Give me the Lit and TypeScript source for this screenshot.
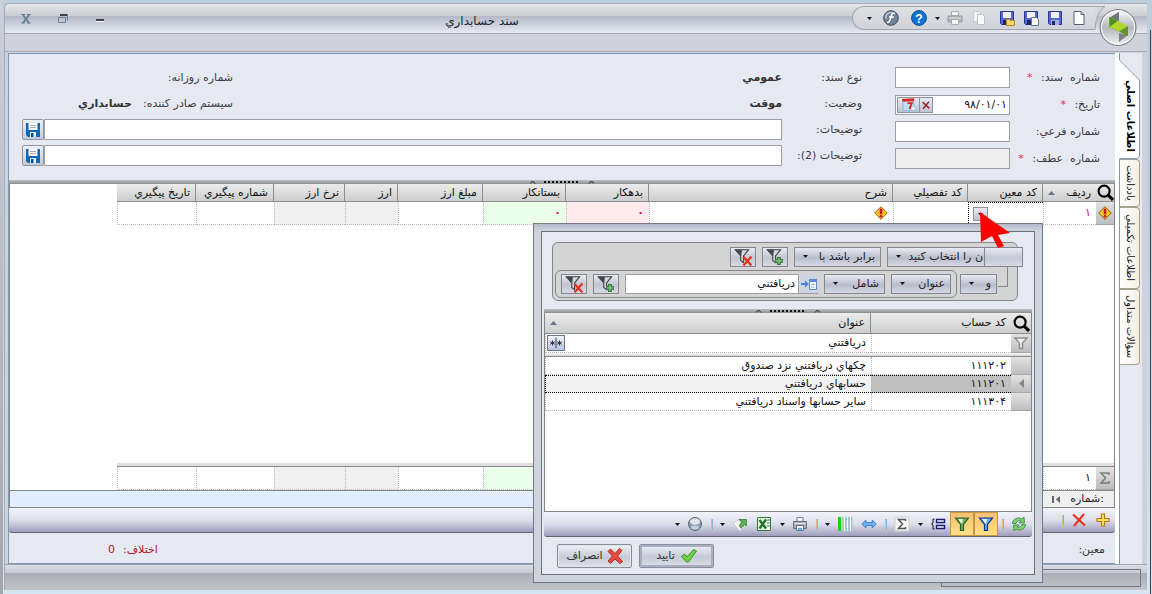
import { LitElement, html, css, svg, nothing } from "lit";
import { customElement } from "lit/decorators.js";
import { classMap } from "lit/directives/class-map.js";

const ICONS: Record<string, unknown> = {
  page: svg`<path d="M3 1.500h7l3 3v10H3z" fill="#fff" stroke="#55607a"/><path d="M10 1.500v3h3" fill="#cdd6e6" stroke="#55607a"/>`,
  save: svg`<path d="M1.500 1.500h13v13h-12l-1-1z" fill="#5a68d2" stroke="#2a368c"/><path d="M4 2h8v6H4z" fill="#eef1fd"/><path d="M4 10h8v5H4z" fill="#a5aee8"/><path d="M5 11h3v4H5z" fill="#1d2766"/>`,
  saveDoc: svg`<path d="M1.500 1.500h13v13h-12l-1-1z" fill="#5a68d2" stroke="#2a368c"/><path d="M4 2h8v6H4z" fill="#eef1fd"/><path d="M4 10h4v5H4z" fill="#1d2766"/><path d="M8.500 7.500h5l2 2v6h-7z" fill="#fff" stroke="#5d77a8"/>`,
  saveFolder: svg`<path d="M1.500 1.500h13v13h-12l-1-1z" fill="#5a68d2" stroke="#2a368c"/><path d="M4 2h8v6H4z" fill="#eef1fd"/><path d="M4 10h3v5H4z" fill="#1d2766"/><path d="M7.500 15.500v-6h3l1 1h4v5z" fill="#ffd56a" stroke="#b98316"/>`,
  copy: svg`<path d="M2.500 1.500h5l2 2v8h-7z" fill="#f1f2f4" stroke="#c9cbd0"/><path d="M6.500 4.500h5l2 2v8h-7z" fill="#fafafa" stroke="#c0c2c8"/>`,
  printGrey: svg`<path d="M4.500 1.500h7v4h-7z" fill="#f4f4f4" stroke="#a9abb0"/><path d="M1 6h14v6H1z" fill="#b5b7bb" stroke="#999ba0"/><path d="M4.500 9.500h7v5h-7z" fill="#f6f6f6" stroke="#a9abb0"/><path d="M2 8h12" stroke="#e4e4e6"/>`,
  print: svg`<path d="M5 1.500h6v4H5z" fill="#e8f4ff" stroke="#77808f"/><path d="M1.500 5.500h13v7h-13z" fill="#aab0bb" stroke="#676d7a"/><path d="M2.500 7.500h11" stroke="#e4e7ee"/><path d="M4.500 9.500h7v5h-7z" fill="#f4faff" stroke="#677387"/><path d="M6 12h4v2H6z" fill="#4fb6ee"/>`,
  help: svg`<circle cx="8" cy="8" r="7.400" fill="#0d74cf" stroke="#084c93"/><text x="8" y="12.500" text-anchor="middle" font-family="Liberation Sans" font-weight="700" font-size="12" fill="#fff">?</text>`,
  func: svg`<circle cx="8" cy="8" r="7.300" fill="#6f8197" stroke="#3e4c60"/><path d="M3 9a5 5 0 0 1 7-6" fill="none" stroke="#b7c4d4" stroke-width="1.500"/><path d="M12 3.500c-3-1-3.500 1-4.500 5S5.500 12.500 4 12.500M6 7h5" fill="none" stroke="#fff" stroke-width="1.600"/>`,
  disk: svg`<path d="M1 1h14v14H3l-2-2z" fill="#0b68b8"/><path d="M3.500 1h9v7h-9z" fill="#fff"/><path d="M5 3.500h6M5 5.500h6" stroke="#a9adb5"/><path d="M5 10h6v5H5z" fill="#e7f1fb"/><path d="M6 11h2.500v4H6z" fill="#0a4a8c"/>`,
  calendar: svg`<path d="M1.500 3.500h11l3 11h-13z" fill="#bfe0f8" stroke="#8bb4d6"/><path d="M1 2l13-.8V4.500L1.500 5z" fill="#dd2c1d"/><path d="M7 6.500h4.500L9 13" fill="none" stroke="#d42c1e" stroke-width="2"/><path d="M11 13l3.500-3v4z" fill="#fff"/>`,
  clear: svg`<path d="M3.500 4l9 8.500M12 3.500L4 13" stroke="#9c1f2b" stroke-width="2"/>`,
  warn: svg`<path d="M8 .8L15.200 8 8 15.200.8 8z" fill="#f7c624" stroke="#7a5010"/><path d="M8 3v6.500" stroke="#c61616" stroke-width="2.800"/><circle cx="8" cy="11.700" r="1.500" fill="#c61616"/>`,
  search: svg`<circle cx="6.700" cy="6.700" r="5.200" fill="none" stroke="#000" stroke-width="2"/><path d="M10.500 10.500l4.500 4.500" stroke="#000" stroke-width="3"/>`,
  funnelGrey: svg`<path d="M2 3h12L9.500 8v5.500h-3V8z" fill="#f3f3f3" stroke="#8f8f8f" stroke-width="1.500"/>`,
  funnelAdd: svg`<path d="M1 1.500h12L8.500 7v6L6 11V7z" fill="#d4dade" stroke="#3f4347"/><path d="M1 1.500h6L6.500 7z" fill="#44484d"/><path d="M11.500 8v7M8 11.500h7" stroke="#3c7a42" stroke-width="3.500"/><path d="M11.500 9v5M9 11.500h5" stroke="#79bd78" stroke-width="1.500"/>`,
  funnelDel: svg`<path d="M1 1.500h12L8.500 7v6L6 11V7z" fill="#d4dade" stroke="#3f4347"/><path d="M1 1.500h6L6.500 7z" fill="#44484d"/><path d="M8.500 8l7 7.500M15.500 7.500l-7 8" stroke="#e6341f" stroke-width="2"/>`,
  funnelBlue: svg`<path d="M1.500 2h13L9.500 8.500v6h-3v-6z" fill="#5fb2ee" stroke="#0d2f8d" stroke-width="1.200"/><path d="M4 3h5L8 8z" fill="#e3f6ff"/>`,
  funnelGreen: svg`<path d="M1.500 2h13L9.500 8.500v6h-3v-6z" fill="#6dab5c" stroke="#2c602b" stroke-width="1.200"/><path d="M4 3h5L8 8z" fill="#e6f5df"/>`,
  pick: svg`<path d="M0 7h4V4.500L8 8l-4 3.500V9H0z" fill="#3f86dd"/><path d="M8.500 3.500h7v10h-7z" fill="#fff" stroke="#5b8bd0"/><path d="M8 3h8v3H8z" fill="#5b8bd0"/><path d="M10 8.500h4M10 11h4" stroke="#8fa8cc"/>`,
  contains: svg`<path d="M8 2v12" stroke="#1f2633"/><path d="M4 5v6M1.300 6.500l5.400 3M6.700 6.500l-5.400 3M12 5v6M9.300 6.500l5.400 3M14.700 6.500l-5.400 3" stroke="#1f2633"/>`,
  refresh: svg`<path d="M1.500 7.500C1.500 3 7 .5 11 3l2-2 .5 6H8l2-2c-2-1-4.500 0-5 2.500z" fill="#7fd173" stroke="#2f8436" stroke-width=".8"/><path d="M14.500 8.500c0 4.500-5.500 7-9.500 4.500l-2 2L2.500 9H8l-2 2c2 1 4.500 0 5-2.500z" fill="#7fd173" stroke="#2f8436" stroke-width=".8"/>`,
  group: svg`<path d="M6.500 3.500h8v3h-8zM6.500 9.500h8v3h-8z" fill="#fff" stroke="#141d72" stroke-width="1.400"/><path d="M4.500 3H3v4L1.500 8 3 9v4h1.500" fill="none" stroke="#111"/>`,
  sigma: svg`<path d="M1 1h14v14H1z" fill="#f3f3f3" stroke="#d0d0d4"/><path d="M11.500 5V3.500h-7L8.500 8l-4 4.500h7V11" fill="none" stroke="#555" stroke-width="1.500"/>`,
  sum: svg`<path d="M12 5V3H4l4.500 5L4 13h8v-2" fill="none" stroke="#7c7c7c" stroke-width="1.500"/>`,
  width: svg`<path d="M.8 8l4-4v2.500h6.400V4l4 4-4 4V9.500H4.800V12z" fill="#6eb4ee" stroke="#2b70b8" stroke-width=".8"/>`,
  columns: svg`<path d="M1 1h3v14H1z" fill="#1fd019"/><path d="M5 1h2v14H5z" fill="#9fdd9c"/><path d="M8 1h2v14H8zM11 1h2v14h-2zM14 1h1.500v14H14z" fill="#a7c4d6"/><path d="M7 1h1v14H7zM10 1h1v14h-1zM13 1h1v14h-1z" fill="#fff"/>`,
  excel: svg`<path d="M1.500 1.500h13v13h-13z" fill="#fff" stroke="#2f7c37"/><path d="M2 2h9v12H2z" fill="#dff0db"/><path d="M3.500 4l6.500 8.500M10 3.500L3.500 12.500" stroke="#26722d" stroke-width="2.300"/><path d="M11 4h3M11 7h3M11 10h3" stroke="#2f7c37"/>`,
  export: svg`<path d="M1 7l6-3.500 5 8L8 15z" fill="#fff" stroke="#c5c8cd"/><path d="M7 3.500h7.500V10l-2-1.500-3.500 4-2-3L10 6z" fill="#5fae5a" stroke="#2c6f2b" stroke-width=".7"/>`,
  sphere: svg`<circle cx="8" cy="8" r="6.500" fill="#8f9aac" stroke="#5c6472"/><ellipse cx="8" cy="5.500" rx="5" ry="3.300" fill="#dfe5ee"/><ellipse cx="8" cy="11.500" rx="4" ry="2" fill="#bed1e2"/>`,
  tick: svg`<path d="M.5 8.500l3-2.500L6 9l6.500-7.500L15.500 3l-8 11h-2z" fill="#6fd044" stroke="#2f8a1d" stroke-width=".9"/>`,
  cross: svg`<path d="M1 3.500L3.500 1 8 5.500 12.500.5l2.500 2L10.500 8l5 5.500-2.500 2L8 11l-4.500 4.500L1 13l4.500-5z" fill="#ea4a42" stroke="#94160f" stroke-width=".8"/>`,
  plus: svg`<path d="M6.500 2h3v4.500H14v3H9.500V14h-3V9.500H2v-3h4.500z" fill="#ffe06a" stroke="#b47a13" stroke-width="1.200"/>`,
  remove: svg`<path d="M2 2.500l12 11M13 2L3 14" stroke="#e8321d" stroke-width="2"/>`,
};

const icon = (name: string, size = 16) =>
  html`<svg width=${size} height=${size} viewBox="0 0 16 16" aria-hidden="true">${ICONS[name]}</svg>`;
const caret = html`<svg width="5" height="3" viewBox="0 0 5 3" aria-hidden="true"><path d="M0 0h5L2.500 3z" fill="#111"/></svg>`;
const sortMark = html`<svg class="sort" width="7" height="4" viewBox="0 0 7 4" aria-hidden="true"><path d="M0 4h7L3.500 0z" fill="#6d7488"/></svg>`;
const grip = html`<div class="splitter"><svg width="64" height="4" viewBox="0 0 64 4" aria-hidden="true">
  <path d="M0 3.500L2.500 1 5 3.500M59 3.500L61.500 1 64 3.500" fill="none" stroke="#111"/>
  <path d="M14 2h36" stroke="#111" stroke-width="2" stroke-dasharray="2 2"/></svg></div>`;

type Tool = [name: string, label: string, active?: boolean];
const tool = ([name, label, active]: Tool) => {
  if (name === "|") return html`<span class="sep"></span>`;
  if (name === "v") return html`<button class="tool drop" aria-label=${label}>${caret}</button>`;
  return html`<button class=${classMap({ tool: true, active: !!active })} aria-label=${label}>${icon(name)}</button>`;
};

const shared = css`
  * { box-sizing: border-box; }
  button, input, select { font: inherit; color: inherit; margin: 0; padding: 0; border-radius: 0; }
  button { background: none; border: 0; display: inline-flex; align-items: center; justify-content: center; }
  svg { display: block; flex: none; }
  input { border: 1px solid #a0a0a4; background: #fff; min-width: 0; outline: 0; }
  table { border-collapse: separate; border-spacing: 0; table-layout: fixed; }
  th { font-weight: 400; text-align: right; white-space: nowrap; background: linear-gradient(#ececec, #cccdce); border-bottom: 1px solid #8c8c8c; padding: 0 5px; color: #111; }
  td { padding: 0 5px; white-space: nowrap; color: #111; border-left: 1px dotted #b8b8b8; border-bottom: 1px dotted #b8b8b8; }
  .splitter { height: 4px; background: linear-gradient(#bfc1c5, #8a8b8e); display: flex; justify-content: center; flex: none; }
  .tool { width: 24px; height: 24px; flex: none; }
  .drop { width: 12px; }
  .active { background: linear-gradient(#f6c173, #ffdf86); border: 1px solid #c79647; }
  .sep { width: 9px; height: 11px; display: flex; justify-content: center; flex: none; }
  .sep::before { content: ""; width: 2px; background: linear-gradient(90deg, #d9bd84 50%, #8cb2da 50%); }
  .toolbar { display: flex; align-items: center; height: 25px; flex: none; background: linear-gradient(#f2f3fa 0%, #dcdfeb 50%, #9f9dbb 100%); border-bottom: 1px solid #63646c; border-radius: 0 0 3px 3px; }
  .search { padding: 0; }
  .search svg { margin: auto; }
  .headcell { display: flex; align-items: center; justify-content: space-between; }
  .rowmark { background: linear-gradient(#e2e2e2, #bdbec0); border: 1px solid #a5a5a5; border-width: 0 0 1px 0; padding: 0; }
  .rowmark svg { margin: auto; }
`;

@customElement("account-lookup")
export class AccountLookup extends LitElement {
  static styles = [shared, css`
    :host { display: flex; flex-direction: column; border: 1px solid #777a84; padding: 7px; background: #cfd3de; box-shadow: inset 0 6px 4px -3px #b2b9c8; direction: rtl; }
    .inner { border: 1px solid #6c6f78; background: #e6e9f2; flex: 1; display: flex; flex-direction: column; padding: 10px 2px 6px; }
    .builder { margin: 0 14px 8px 8px; height: 59px; border: 1px solid #85868a; border-radius: 6px; background: #d4d4d4; position: relative; padding: 4px 0 1px 2px; display: flex; flex-direction: column; gap: 3px; }
    .line { display: flex; align-items: center; gap: 6px; }
    .first { margin-right: -6px; padding-left: 175px; }
    .second { padding-right: 20px; gap: 3px; }
    .nested { flex: 1; display: flex; gap: 6px; align-items: center; border: 1px solid #85868a; border-radius: 6px; height: 28px; padding: 0 5px; }
    .pick { display: flex; position: relative; height: 20px; border: 1px solid #85868f; background: linear-gradient(#e8eaf3, #b9bdcb 55%, #d6d9e4); flex: none; }
    .pick svg { position: absolute; left: 8px; top: 7px; pointer-events: none; }
    select { appearance: none; border: 0; background: none; width: 100%; padding: 0 5px 0 16px; outline: 0; color: #222; }
    .field { width: 136px; }
    .field select { padding-right: 39px; }
    .cap { position: absolute; right: 0; top: 0; width: 38px; height: 18px; border-left: 1px solid #85868f; background: linear-gradient(#e8eaf3, #c4c8d5 55%, #d6d9e4); }
    .op { width: 87px; }
    .and { width: 37px; }
    .col { width: 60px; }
    .like { width: 61px; }
    .ib { width: 26px; height: 20px; border: 1px solid #85868f; background: linear-gradient(#e8eaf3, #c2c6d3 55%, #d6d9e4); flex: none; }
    .value { flex: 1; display: flex; height: 20px; min-width: 0; }
    .value input { flex: 1; padding: 0 3px; color: #111; }
    .value button { width: 19px; border: 1px solid #9a9ba3; border-width: 0 0 1px; background: #cfd3de; }
    .elbow { position: absolute; right: 9px; top: 24px; width: 10px; height: 20px; border: 1px solid #85868a; border-width: 0 1px 1px 0; }
    .grid { flex: 1; background: #fff; border: 1px solid #85868a; border-width: 0 1px 1px; }
    table { width: 100%; }
    thead th { height: 21px; }
    th.name { border-right: 1px solid #8c8c8c; }
    tbody td { height: 18px; }
    tbody tr.filter td { height: 19px; }
    .filterend td { height: 4px; padding: 0; border: 0; border-bottom: 1px solid #8c8c8c; background: linear-gradient(#fafafa, #d6d6d6); }
    tr.filter input { border: 0; flex: 1; }
    .cellrow { display: flex; align-items: center; justify-content: space-between; height: 18px; }
    .mode { width: 18px; height: 16px; border: 1px solid #6d7488; background: linear-gradient(#f3f5fb, #b8c6e2); margin-left: -4px; }
    .chosen td { border-top: 1px dotted #000; border-bottom: 1px dotted #000; }
    .chosen td.rowmark { border-top: 0; border-bottom: 1px solid #a5a5a5; }
    .chosen .code { background: #c0c0c0; }
    .chosen .name { background: #f1f1f1; border-left-color: #000; }
    .toolbar { padding-right: 1px; }
    .actions { display: flex; direction: ltr; gap: 7px; padding: 7px 13px 0; }
    .actions button { width: 75px; height: 24px; gap: 4px; border: 1px solid #8a8d98; border-radius: 2px; background: linear-gradient(#f0f1f7, #c6cad6 55%, #dcdfe8); box-shadow: inset 0 0 0 1px #e2e4ec; color: #333; }
    .actions .ok { border-color: #8b90a0; box-shadow: inset 0 0 0 2px #a9afbe; gap: 6px; }
  `];

  rows = [
    ["۱۱۱۲۰۲", "چکهاي دریافتني نزد صندوق"],
    ["۱۱۱۲۰۱", "حسابهاي دریافتني"],
    ["۱۱۱۳۰۴", "سایر حسابها واسناد دریافتني"],
  ];

  tools: Tool[] = [
    ["refresh", "refresh"], ["|", ""], ["funnelBlue", "filter row", true], ["funnelGreen", "filter builder", true],
    ["group", "group"], ["v", "totals menu"], ["sigma", "totals"], ["|", ""], ["width", "fit width"], ["columns", "columns"],
    ["v", "columns menu"], ["|", ""], ["print", "print"], ["v", "print menu"], ["excel", "excel"], ["export", "export"],
    ["v", "export menu"], ["|", ""], ["sphere", "view"], ["v", "view menu"],
  ];

  choice(cls: string, label: string, text: string, cap: unknown = nothing) {
    return html`<div class="pick ${cls}"><select aria-label=${label}><option>${text}</option></select>${caret}${cap}</div>`;
  }

  render() {
    return html`<div class="inner">
      <div class="builder">
        <div class="line first">
          ${this.choice("field", "column", "ن را انتخاب کنید", html`<button class="cap" aria-label="column"></button>`)}
          ${this.choice("op", "operator", "برابر باشد با")}
          <button class="ib" aria-label="add filter">${icon("funnelAdd", 18)}</button>
          <button class="ib" aria-label="delete filter">${icon("funnelDel", 18)}</button>
        </div>
        <div class="line second">
          ${this.choice("and", "join", "و")}
          <div class="nested">
            ${this.choice("col", "column", "عنوان")}
            ${this.choice("like", "operator", "شامل")}
            <div class="value">
              <button aria-label="pick value">${icon("pick")}</button>
              <input aria-label="value" value="دریافتني">
            </div>
            <button class="ib" aria-label="add filter">${icon("funnelAdd", 18)}</button>
            <button class="ib" aria-label="delete filter">${icon("funnelDel", 18)}</button>
          </div>
        </div>
        <div class="elbow"></div>
      </div>
      ${grip}
      <div class="grid">
        <table>
          <colgroup><col style="width:20px"><col style="width:140px"><col></colgroup>
          <thead><tr>
            <th class="search">${icon("search", 17)}</th><th>کد حساب</th>
            <th class="name"><div class="headcell">عنوان${sortMark}</div></th>
          </tr></thead>
          <tbody>
            <tr class="filter">
              <td class="rowmark">${icon("funnelGrey")}</td>
              <td></td>
              <td><div class="cellrow"><input aria-label="عنوان" value="دریافتني"><button class="mode" aria-label="contains">${icon("contains", 14)}</button></div></td>
            </tr>
            <tr class="filterend"><td colspan="3"></td></tr>
            ${this.rows.map(([code, name], i) => html`<tr class=${classMap({ chosen: i === 1 })}>
              <td class="rowmark">${i === 1 ? html`<svg width="5" height="9" viewBox="0 0 5 9"><path d="M5 0v9L0 4.500z" fill="#888"/></svg>` : nothing}</td>
              <td class="code">${code}</td><td class="name">${name}</td></tr>`)}
          </tbody>
        </table>
      </div>
      <div class="toolbar">${this.tools.map(tool)}</div>
      <div class="actions">
        <button dir="rtl">${icon("cross")}انصراف</button>
        <button class="ok" dir="rtl">${icon("tick")}تایید</button>
      </div>
    </div>`;
  }
}

@customElement("app-root")
export class AppRoot extends LitElement {
  static styles = [shared, css`
    :host { display: flex; min-height: 100vh; padding: 3px 5px 4px 4px; background: linear-gradient(#bccddc 0 30%, #d6e3f1); position: relative; box-sizing: border-box; font: 11px/14px "DejaVu Sans", sans-serif; color: #333; }
    :host::before { content: ""; position: absolute; left: 0; top: 0; bottom: 0; width: 3px; background: linear-gradient(#cdd0da, #a2a6ae); }
    :host::after { content: ""; position: absolute; right: 1px; top: 30px; bottom: 0; width: 1px; background: #3f424a; }
    .window { flex: 1; min-width: 0; display: flex; flex-direction: column; border: 1px solid #a9abb5; border-right: 0; border-bottom: 0; border-radius: 5px 0 0 0; background: #cfd2dc; }
    .title { display: flex; height: 30px; flex: none; background: linear-gradient(#e6e7ea 0, #cbccd0 42%, #b4bac9 43%, #e6e9f2 100%); border-bottom: 1px solid #a9aab5; border-radius: 5px 0 0 0; }
    .controls { display: flex; gap: 13px; padding-left: 9px; align-items: center; }
    .controls button { width: 24px; height: 24px; }
    .title h1 { flex: 1; margin: 0; text-align: center; font-size: 12px; line-height: 34px; font-weight: 400; color: #22222c; }
    .quick { position: relative; display: flex; direction: rtl; width: 241px; height: 24px; margin: 2px 54px 0 0; border: 1px solid #a4a6ad; border-right: 0; border-radius: 12px 0 0 12px; background: linear-gradient(#dfe0e3, #d0d2d9); align-items: center; padding-right: 2px; }
    .quick .space { width: 4px; }
    .orb { position: absolute; left: 240px; top: -1px; }
    .body { flex: 1; display: flex; margin-top: 17px; border-top: 1px solid #a8aab0; padding: 1px 5px 0 3px; }
    .panel { flex: 1; min-width: 0; direction: rtl; background: #e6e9f2; border: 1px solid #7b9ab8; border-right: 0; display: flex; flex-direction: column; }
    .tabs { width: 27px; background: #e6e9f2; border-left: 4px solid #fff; display: flex; flex-direction: column; position: relative; }
    .tabs::before { content: ""; position: absolute; left: 0; top: 106px; bottom: 0; border-left: 1px solid #7b9ab8; }
    .tab { width: 21px; height: 76px; border: 1px solid #a5a28e; border-left-color: #7b9ab8; border-radius: 0 4px 4px 0; background: linear-gradient(90deg, #fff, #f5f0e4); position: relative; }
    .tab span { writing-mode: vertical-rl; direction: rtl; white-space: nowrap; font-size: 10px; color: #111; position: relative; }
    .tab:nth-child(2) { height: 48px; }
    .tab:nth-child(3) { height: 82px; }
    .tab:first-child { height: 106px; border: 0; background: none; padding-top: 20px; }
    .tab:first-child span { font-weight: 700; color: #000; }
    .shape { position: absolute; left: 0; top: 0; }
    .form { display: flex; gap: 33px; padding: 13px 15px 11px 13px; height: 126px; }
    .side { width: 205px; display: flex; flex-direction: column; gap: 6px; }
    .rest { flex: 1; min-width: 0; display: flex; flex-direction: column; gap: 5px; }
    .f { display: flex; align-items: center; height: 21px; }
    .f label, .f .lab { width: 90px; flex: none; white-space: pre; color: #3a3a40; }
    .rest label, .rest .lab { width: 80px; }
    .f input { flex: 1; height: 21px; padding: 0 3px; color: #111; }
    .star { color: #e8294b; padding-right: 5px; }
    .f input:disabled { background: #efefef; }
    .f .date { flex: 1; min-width: 0; display: flex; border: 1px solid #a0a0a4; background: #fff; height: 20px; padding: 1px; }
    .f .date input { border: 0; height: 16px; width: 20px; padding: 0 1px; }
    .date button { border: 1px solid #8f92a0; background: linear-gradient(#e8eaf3, #bfc3d0); width: 14px; height: 16px; flex: none; }
    .date .cal { width: 22px; border-right-width: 0; }
    .value { flex: 1; font-weight: 700; }
    .issuer { width: 211px; display: flex; gap: 11px; }
    .issuer .lab { width: auto; }
    .f .store { width: 22px; height: 21px; border: 1px solid #9296a4; border-radius: 2px; background: linear-gradient(#eef0f6, #c5c9d5); }
    .sheet { flex: 1; display: flex; flex-direction: column; background: #fff; border: 1px solid #85868a; border-width: 0 1px; }
    .sheet table { width: calc(100% - 107px); }
    .sheet th { height: 18px; }
    .sheet th + th + th { border-right: 1px solid #8c8c8c; }
    .sheet td { height: 23px; }
    .sheet .fill { flex: 1; }
    .sheet td.cr { background: #ebffeb; }
    .sheet td.db { background: #ffebeb; }
    .sheet td.ro { background: #f0f0f0; }
    .sheet td.red { color: #e00020; font-weight: 700; }
    .sheet td.pinkno { color: #d01455; }
    .sheet td.focus { padding: 0; border: 1px dotted #000; border-width: 1px 0 0 1px; }
    .focus div { display: flex; height: 20px; align-items: center; padding-left: 4px; }
    .focus input { border: 0; flex: 1; height: 18px; }
    .focus button { width: 15px; height: 14px; border: 1px solid #8f92a0; background: linear-gradient(#e8eaf3, #bfc3d0); }
    .total { border-top: 1px solid #8c8c8c; box-shadow: 0 -3px 0 #dfdfdf; }
    .nav { display: flex; height: 18px; flex: none; border: 1px solid #85868a; background: #e2eeff; }
    .nav div { width: 72px; background: #efefef; display: flex; align-items: center; justify-content: space-between; padding: 0 10px; color: #222; }
    .foot { height: 30px; display: flex; justify-content: space-between; align-items: center; padding: 3px 10px 0 99px; }
    .foot .diff { color: #b8141e; display: flex; gap: 8px; }
    .status { height: 26px; flex: none; border-top: 1px solid #9ea1aa; background: linear-gradient(#dcdee4 0, #c6c9d1 30%, #a9adb5 31%, #c2c4c8 100%); padding: 4px 6px 3px; display: flex; justify-content: flex-end; }
    .status div { width: 200px; border: 1px solid #757882; }
    .lookup { position: absolute; top: 223px; right: 109px; width: 510px; height: 360px; }
    .pointer { position: absolute; right: 120px; top: 209px; }
  `];

  quick: Tool[] = [["page", "new"], ["save", "save"], ["saveDoc", "save and new"], ["saveFolder", "save and close"]];
  cols = [18, 53, 75, 75, 0, 83, 83, 85, 53, 71, 78, 79];
  heads = ["کد تفصیلي", "شرح", "بدهکار", "بستانکار", "مبلغ ارز", "ارز", "نرخ ارز", "شماره پیگیري", "تاریخ پیگیري"];

  colgroup() {
    return html`<colgroup>${this.cols.map((w) => html`<col style=${w ? `width:${w}px` : ""}>`)}</colgroup>`;
  }

  render() {
    return html`
      <div class="window">
        <header class="title">
          <div class="controls">
            <button aria-label="close"><svg width="10" height="10" viewBox="0 0 10 10"><path d="M2 1l6 8M8 1L2 9" stroke="#6d7f92" stroke-width="2"/><path d="M0 9h4M6 9h4M0 .5h4M6 .5h4" stroke="#6d7f92"/></svg></button>
            <button aria-label="restore"><svg width="10" height="9" viewBox="0 0 10 9"><path d="M2 1h7.500v5.500M1 3.500h6.500v5H.5v-5z" fill="none" stroke="#6d7f92"/><path d="M2 1h7.500" stroke="#3e4450" stroke-width="2"/></svg></button>
            <button aria-label="minimize"><svg width="8" height="6" viewBox="0 0 8 6"><path d="M0 4h8" stroke="#3e4450" stroke-width="2"/><path d="M0 5.500h8" stroke="#fff"/></svg></button>
          </div>
          <h1>سند حسابداري</h1>
          <nav class="quick">
            ${this.quick.map(tool)}<span class="space"></span>
            ${tool(["copy", "copy"])}${tool(["printGrey", "print"])}${tool(["v", "print menu"])}
            ${tool(["help", "help"])}<span class="space"></span>${tool(["func", "functions"])}<span class="space"></span>${tool(["v", "more"])}
            <svg class="orb" width="46" height="42" viewBox="0 0 46 42" aria-hidden="true">
              <defs><linearGradient id="o" x1="0" y1="0" x2="0" y2="1"><stop offset="0" stop-color="#fff"/><stop offset=".5" stop-color="#b4b6ba"/><stop offset="1" stop-color="#f2f2f3"/></linearGradient></defs>
              <path d="M0 .5h12C5 5 3 12 2 23.500H0" fill="#d7d9de"/>
              <path d="M0 .5h12C5 5 3 12 2 23.500H0" fill="none" stroke="#a4a6ad"/>
              <circle cx="25" cy="21.500" r="18" fill="url(#o)" stroke="#77797f"/>
              <circle cx="25" cy="21.500" r="16.500" fill="none" stroke="#fff"/>
              <path d="M26 6v9l-9-3z" fill="#74777a"/><path d="M26 6v9l-10-3z" fill="#74777a"/><path d="M26 36v-9l9 2z" fill="#808386"/>
              <path d="M16.500 11l9 4.500v10l-9-4.500z" fill="#4d8f22"/><path d="M16.500 11l18.500 9-9 5.500-9.500-4.500z" fill="#b2d62a"/><path d="M16.500 11l8 4-8 6z" fill="#4d8f22"/><path d="M35 20v10l-9-4.500z" fill="#5e9422"/>
            </svg>
          </nav>
        </header>
        <div class="body">
          <main class="panel">
            <section class="form">
              <div class="side">
                <div class="f"><label for="no">شماره  سند: <span class="star">*</span></label><input id="no"></div>
                <div class="f"><label for="date">تاریخ: <span class="star">*</span></label>
                  <div class="date"><input id="date" value="۹۸/۰۱/۰۱"><button aria-label="clear">${icon("clear", 12)}</button><button class="cal" aria-label="calendar">${icon("calendar", 15)}</button></div></div>
                <div class="f"><label for="sub">شماره فرعي:</label><input id="sub"></div>
                <div class="f"><label for="ref">شماره  عطف: <span class="star">*</span></label><input id="ref" disabled></div>
              </div>
              <div class="rest">
                <div class="f"><span class="lab">نوع سند:</span><span class="value">عمومي</span><div class="issuer"><span class="lab">شماره روزانه:</span></div></div>
                <div class="f"><span class="lab">وضعیت:</span><span class="value">موقت</span><div class="issuer"><span class="lab">سیستم صادر کننده:</span><b>حسابداري</b></div></div>
                <div class="f"><label for="d1">توضیحات:</label><input id="d1"><button class="store" aria-label="save text">${icon("disk")}</button></div>
                <div class="f"><label for="d2">توضیحات (2):</label><input id="d2"><button class="store" aria-label="save text">${icon("disk")}</button></div>
              </div>
            </section>
            ${grip}
            <section class="sheet">
              <table>
                ${this.colgroup()}
                <thead><tr>
                  <th class="search">${icon("search", 17)}</th>
                  <th><div class="headcell">ردیف${sortMark}</div></th><th>کد معین</th>
                  ${this.heads.map((h) => html`<th>${h}</th>`)}
                </tr></thead>
                <tbody><tr>
                  <td class="rowmark">${icon("warn", 14)}</td><td class="pinkno">۱</td>
                  <td class="focus"><div><input aria-label="کد معین"><button aria-label="open list">${caret}</button></div></td>
                  <td></td><td>${icon("warn", 14)}</td><td class="db red">۰</td><td class="cr red">۰</td>
                  <td></td><td class="ro"></td><td class="ro"></td><td></td><td></td>
                </tr></tbody>
              </table>
              <div class="fill"></div>
              <table class="total">
                ${this.colgroup()}
                <tbody><tr>
                  <td class="rowmark">${icon("sum")}</td><td>۱</td><td></td><td></td><td></td><td class="db"></td><td class="cr"></td>
                  <td></td><td class="ro"></td><td class="ro"></td><td></td><td></td>
                </tr></tbody>
              </table>
            </section>
            <div class="nav"><div><span>:شماره</span><svg width="9" height="7" viewBox="0 0 9 7"><path d="M1 0v7" stroke="#666" stroke-width="2"/><path d="M8 0v7L4 3.500z" fill="#666"/></svg></div></div>
            <div class="toolbar">${tool(["plus", "add row"])}${tool(["remove", "delete row"])}${tool(["|", ""])}</div>
            <footer class="foot"><span>معین:</span><span class="diff"><span>اختلاف:</span><span>0</span></span></footer>
          </main>
          <nav class="tabs">
            <button class="tab"><svg class="shape" width="21" height="106" viewBox="0 0 21 106"><path d="M.5 0v7l20 20v76l-2 2.500H0V0z" fill="#fff"/><path d="M.5 0v7l20 20v76l-2 2.500H.5" fill="none" stroke="#7b9ab8"/></svg><span>اطلاعات اصلي</span></button>
            <button class="tab"><span>یادداشت</span></button>
            <button class="tab"><span>اطلاعات تکمیلي</span></button>
            <button class="tab"><span>سؤالات متداول</span></button>
          </nav>
        </div>
        <div class="status"><div></div></div>
      </div>
      <account-lookup class="lookup"></account-lookup>
      <svg class="pointer" width="56" height="40" viewBox="0 0 56 40" aria-hidden="true"><path d="M4 3l30 21-12 2 6 11-6 2-6-12-11 6z" fill="#fe0000"/></svg>
    `;
  }
}
